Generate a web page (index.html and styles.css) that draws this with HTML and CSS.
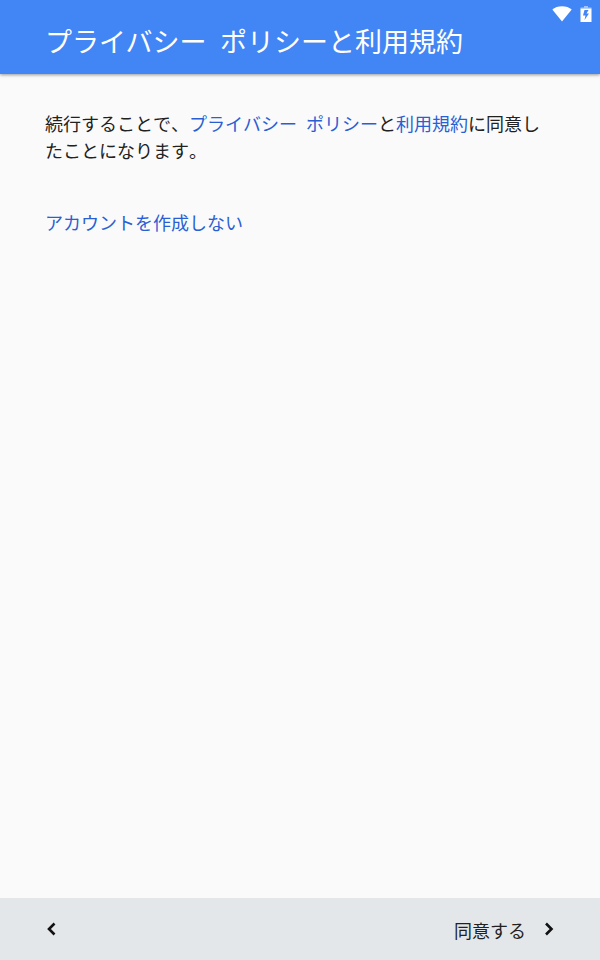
FILE: index.html
```html
<!DOCTYPE html>
<html lang="ja">
<head>
<meta charset="utf-8">
<title>プライバシー ポリシーと利用規約</title>
<link rel="stylesheet" href="styles.css">
</head>
<body>
<header class="header">
<h1 class="title">プライバシー<span class="gap"> </span>ポリシーと利用規約</h1>
<div class="status">
<svg class="wifi" viewBox="0 0 20 17"><path d="M0.300 3.500C5-1 15-1 19.700 3.500L10 15.500Z"/></svg>
<svg class="battery" viewBox="0 0 12 17"><path class="cap" d="M4 0h4v1.500h3.500V2.500H.5V1.500H4z"/><path fill-rule="evenodd" d="M.5 2.500h11V16H.5zM4.500 4L3 9.500h2.500L4.500 14 9 7.500H6.500L8.500 4z"/></svg>
</div>
</header>
<main class="content">
<p class="terms">続行することで、<a class="link">プライバシー<span class="gap"> </span>ポリシー</a>と<a class="link">利用規約</a>に同意し<br>たことになります。</p>
<a class="link skip">アカウントを作成しない</a>
</main>
<footer class="footer">
<svg class="chevron" viewBox="0 0 10 14"><path d="M8.500 1.500L3 7l5.500 5.500"/></svg>
<div class="agree"><span class="label">同意する</span><svg class="chevron" viewBox="0 0 10 14"><path d="M2 1.500L7.500 7 2 12.500"/></svg></div>
</footer>
</body>
</html>
```
FILE: styles.css
```css
* { box-sizing: border-box; }
body {
  margin: 0;
  height: 960px;
  display: flex;
  flex-direction: column;
  background: #fafafa;
  color: #212121;
  font: 18px/27px "Noto Sans CJK JP", sans-serif;
}
.header {
  height: 74px;
  flex: none;
  display: flex;
  justify-content: space-between;
  padding: 0 8px 0 45px;
  background: #4285f4;
  color: #fff;
  box-shadow: 0 1px 3px rgba(0, 0, 0, .4);
}
.title { margin: 21px 0 0; font-size: 27px; line-height: 40px; font-weight: 400; white-space: nowrap; }
.gap { display: inline-block; width: .5em; }
.status { display: flex; gap: 8px; padding-top: 6px; fill: #fff; }
.wifi { width: 20px; height: 17px; }
.battery { width: 12px; height: 17px; }
.cap { opacity: .5; }
.content { flex: 1; padding: 36px 45px; }
.terms { margin: 0 0 45px; white-space: nowrap; font-kerning: none; }
.link { color: #2a5fd4; }
.skip { display: block; }
.footer {
  height: 62px;
  flex: none;
  display: flex;
  align-items: center;
  justify-content: space-between;
  padding: 0 46px;
  background: #e3e7ea;
}
.agree { display: flex; align-items: center; gap: 19px; }
.label { padding-top: 2px; margin-right: -1px; }
.chevron { width: 10px; height: 14px; fill: none; stroke: #111; stroke-width: 2.600; }
```
